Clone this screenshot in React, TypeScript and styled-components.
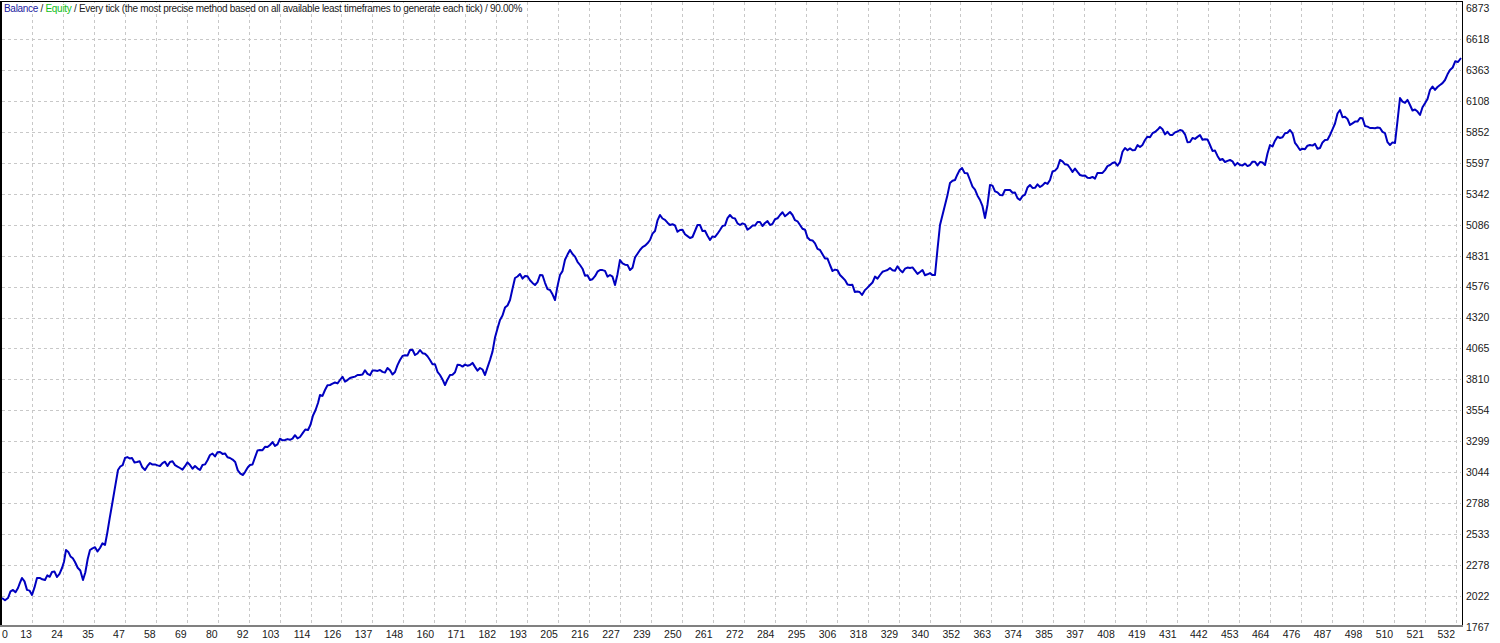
import React from "react";
import styled, { createGlobalStyle } from "styled-components";

const Global = createGlobalStyle`
  html, body { margin: 0; padding: 0; background: #fff; overflow: hidden; }
  body { font-family: "Liberation Sans", Tahoma, sans-serif; }
`;

const W = 1463;
const H = 627;
const STEP = 30.95;

const Page = styled.div`
  display: grid;
  grid-template-columns: ${W}px 37px;
  grid-template-rows: ${H}px 16px;
  width: 1500px;
  height: 643px;
`;

const Chart = styled.div`
  position: relative;
  width: ${W}px;
  height: ${H}px;
`;

const Legend = styled.div`
  position: absolute;
  left: 4px;
  top: 3px;
  font-size: 10px;
  letter-spacing: -0.3px;
  color: #202020;
  background: #fff;
  white-space: nowrap;
`;

const Colored = styled.span<{ $c: string }>`
  color: ${(p) => p.$c};
`;

const YAxis = styled.div`
  display: flex;
  flex-direction: column;
  padding-top: 1px;
  padding-left: 3px;
  overflow: visible;
`;

const YLabel = styled.div`
  height: ${STEP}px;
  flex: none;
  font-size: 10.5px;
  line-height: 14px;
  color: #202020;
`;

const XAxis = styled.div`
  display: flex;
  align-items: flex-start;
`;

const XLabel = styled.div<{ $first?: boolean }>`
  flex: none;
  width: ${(p) => (p.$first ? 1 : STEP)}px;
  text-align: ${(p) => (p.$first ? "left" : "right")};
  padding: 0 ${(p) => (p.$first ? 0 : 2)}px 0 ${(p) => (p.$first ? 2 : 0)}px;
  box-sizing: ${(p) => (p.$first ? "content-box" : "border-box")};
  overflow: visible;
  white-space: nowrap;
  font-size: 10.5px;
  line-height: 15px;
  color: #202020;
`;

const yLabels = [6873, 6618, 6363, 6108, 5852, 5597, 5342, 5086, 4831, 4576, 4320, 4065, 3810, 3554, 3299, 3044, 2788, 2533, 2278, 2022, 1767];
const xLabels = [0, 13, 24, 35, 47, 58, 69, 80, 92, 103, 114, 126, 137, 148, 160, 171, 182, 193, 205, 216, 227, 239, 250, 261, 272, 284, 295, 306, 318, 329, 340, 352, 363, 374, 385, 397, 408, 419, 431, 442, 453, 464, 476, 487, 498, 510, 521, 532];

const key: [number, number][] = [
  [2, 598], [8, 598], [13, 590], [18, 588], [22, 578], [32, 595], [37, 578], [45, 580], [52, 572], [57, 577], [62, 568], [66, 550], [75, 562], [83, 580], [90, 550], [100, 548], [105, 545], [112, 505], [118, 470], [125, 458], [132, 458], [137, 462], [145, 470], [150, 463], [160, 466], [170, 462], [180, 468], [190, 465], [200, 470], [210, 455], [220, 452], [230, 458], [243, 475], [250, 465], [260, 450], [270, 445], [285, 440], [300, 437], [308, 430], [318, 403], [320, 395], [330, 385], [340, 380], [350, 378], [360, 375], [380, 370], [395, 372], [400, 360], [410, 350], [415, 355], [420, 350], [430, 360], [440, 375], [445, 385], [450, 375], [460, 365], [470, 365], [480, 368], [485, 375], [490, 360], [500, 320], [510, 300], [515, 278], [525, 276], [535, 285], [540, 275], [550, 290], [555, 300], [560, 275], [570, 250], [580, 265], [590, 280], [600, 270], [610, 275], [615, 285], [620, 260], [630, 270], [640, 250], [650, 240], [660, 215], [670, 225], [680, 230], [690, 238], [700, 225], [710, 240], [720, 230], [730, 215], [740, 225], [750, 228], [760, 222], [770, 225], [780, 215], [790, 212], [800, 225], [810, 240], [820, 250], [830, 265], [840, 275], [850, 285], [862, 295], [870, 285], [880, 275], [890, 268], [900, 270], [910, 268], [920, 272], [935, 275], [940, 225], [945, 205], [950, 183], [955, 180], [962, 168], [970, 180], [980, 200], [985, 218], [990, 185], [1000, 195], [1010, 190], [1020, 200], [1030, 185], [1040, 187], [1050, 180], [1060, 160], [1070, 168], [1080, 175], [1090, 178], [1100, 173], [1110, 165], [1120, 162], [1125, 148], [1135, 150], [1145, 140], [1160, 127], [1170, 135], [1180, 130], [1190, 142], [1200, 135], [1210, 145], [1220, 160], [1230, 160], [1240, 165], [1250, 165], [1260, 162], [1265, 165], [1270, 145], [1280, 138], [1290, 130], [1300, 150], [1310, 145], [1320, 148], [1330, 135], [1340, 110], [1350, 125], [1360, 118], [1370, 128], [1380, 128], [1390, 145], [1395, 143], [1400, 98], [1410, 105], [1420, 115], [1430, 90], [1440, 85], [1445, 80], [1450, 70], [1458, 62], [1461, 58],
];

function buildPath() {
  const pts: string[] = [];
  for (let i = 0; i < key.length - 1; i++) {
    const [x0, y0] = key[i];
    const [x1, y1] = key[i + 1];
    const n = Math.max(1, Math.round((x1 - x0) / 2.5));
    for (let j = 0; j < n; j++) {
      const t = j / n;
      const x = x0 + (x1 - x0) * t;
      const jit = j === 0 ? 0 : Math.sin(x * 1.7) * 2 + Math.sin(x * 0.53) * 1.5;
      pts.push(`${x.toFixed(1)},${(y0 + (y1 - y0) * t + jit).toFixed(1)}`);
    }
  }
  const l = key[key.length - 1];
  pts.push(`${l[0]},${l[1]}`);
  return "M" + pts.join(" L");
}

const path = buildPath();

export default function App() {
  return (
    <Page>
      <Global />
      <Chart>
        <svg width={W} height={H} style={{ display: "block" }}>
          {Array.from({ length: 19 }, (_, k) => {
            const y = Math.round(8 + (k + 1) * STEP) + 0.5;
            return <line key={"h" + k} x1={2} x2={W - 2} y1={y} y2={y} stroke="#c8c8c8" strokeDasharray="3,3" />;
          })}
          {Array.from({ length: 47 }, (_, k) => {
            const x = Math.round(1 + (k + 1) * STEP) + 0.5;
            return <line key={"v" + k} x1={x} x2={x} y1={2} y2={H - 2} stroke="#c8c8c8" strokeDasharray="3,3" />;
          })}
          <line x1={1} x2={1} y1={1} y2={H} stroke="#000" strokeWidth={2} />
          <line x1={0} x2={W} y1={1.5} y2={1.5} stroke="#000" strokeWidth={1} />
          <line x1={W - 0.5} x2={W - 0.5} y1={1} y2={H} stroke="#000" strokeWidth={1} />
          <line x1={0} x2={W} y1={H - 1} y2={H - 1} stroke="#808080" strokeWidth={2} />
          <path d={path} fill="none" stroke="#0000c0" strokeWidth={2} strokeLinejoin="round" />
        </svg>
        <Legend>
          <Colored $c="#1a1aa0">Balance</Colored> / <Colored $c="#10c020">Equity</Colored> / Every tick (the most precise method based on all available least timeframes to generate each tick) / 90.00%
        </Legend>
      </Chart>
      <YAxis>
        {yLabels.map((v) => (
          <YLabel key={v}>{v}</YLabel>
        ))}
      </YAxis>
      <XAxis>
        {xLabels.map((v, i) => (
          <XLabel key={v} $first={i === 0}>{v}</XLabel>
        ))}
      </XAxis>
      <div />
    </Page>
  );
}
